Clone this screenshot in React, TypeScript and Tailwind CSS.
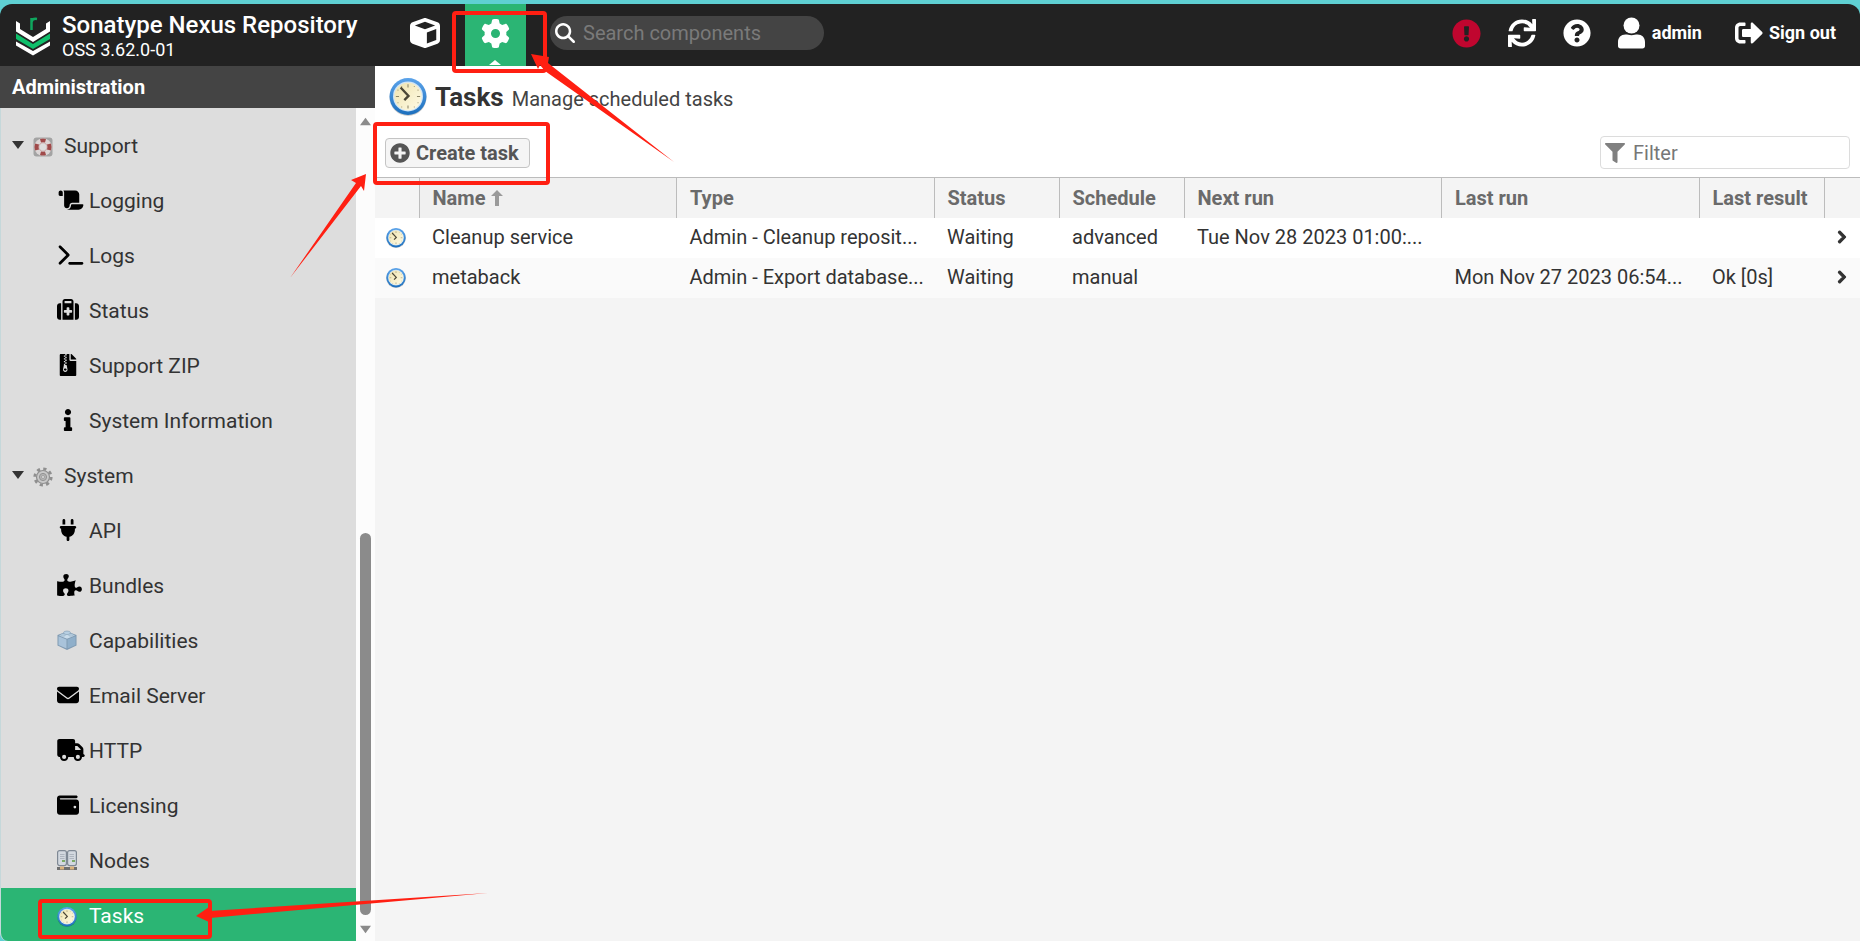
import { FunctionComponent, ReactNode } from "react";
import {
  FaChevronRight,
  FaExclamationCircle,
  FaFileArchive,
  FaFilter,
  FaInfo,
  FaPlusCircle,
  FaPuzzlePiece,
  FaQuestionCircle,
  FaSignOutAlt,
  FaSync,
} from "react-icons/fa";
import {
  FaCube,
  FaEnvelope,
  FaGear,
  FaMagnifyingGlass,
  FaPlug,
  FaScroll,
  FaSuitcaseMedical,
  FaTerminal,
  FaTruck,
  FaWallet,
} from "react-icons/fa6";

const ClockIcon: FunctionComponent<{ className: string }> = ({ className }) => (
  <svg className={className} viewBox="0 0 36 36" aria-hidden="true">
    <defs>
      <linearGradient id="clock-rim" x1="0" y1="0" x2="0" y2="1">
        <stop offset="0" stopColor="#5ba3ea" />
        <stop offset="1" stopColor="#1c6fbd" />
      </linearGradient>
      <linearGradient id="clock-face" x1="0" y1="0" x2="1" y2="1">
        <stop offset="0" stopColor="#efe3ae" />
        <stop offset="1" stopColor="#fffbe6" />
      </linearGradient>
    </defs>
    <circle cx="18" cy="18.5" r="17.500" fill="#00000033" />
    <circle cx="18" cy="17.5" r="17.500" fill="url(#clock-rim)" />
    <circle cx="18" cy="17.5" r="14.200" fill="#cfe4f7" />
    <circle cx="18" cy="17.5" r="13" fill="url(#clock-face)" />
    <path
      d="M18 6v3M18 26v3M6.500 17.500h3M26.500 17.500h3"
      stroke="#8c8668"
      strokeWidth="1"
    />
    <path
      d="M12 7.500v1M24 7.500v1M8 11.500h1M27 11.500h1M8 23.500h1M27 23.500h1M12 27v1M24 27v1"
      stroke="#a9a27f"
      strokeWidth="1"
    />
    <path d="M11 9l7.500 8-4 4" fill="none" stroke="#4b4636" strokeWidth="2.200" />
  </svg>
);

const LifebuoyIcon = () => (
  <svg className="size-5" viewBox="0 0 20 20" aria-hidden="true">
    <rect x="0.500" y="0.500" width="19" height="19" rx="3" fill="#a3a3a3" />
    <circle cx="10" cy="10" r="8.800" fill="#dcd6d6" />
    <path d="M7 2Q10 .8 13 2L12 5.500H8zM7 18q3 1.200 6 0l-1-3.500H8z" fill="#a04a4a" />
    <path d="M2 6.500Q.8 10 2 13.500L6 12.500V7.500zM18 6.500q1.200 3.500 0 7l-4-1v-5z" fill="#a04a4a" />
    <circle cx="10" cy="10" r="4.200" fill="#dedede" stroke="#c79b9b" strokeWidth="0.800" />
  </svg>
);

const SystemIcon = () => (
  <svg className="size-5" viewBox="0 0 20 20" aria-hidden="true">
    <circle
      cx="10"
      cy="10"
      r="8.200"
      fill="none"
      stroke="#8f8f8f"
      strokeWidth="2.800"
      strokeDasharray="3.200 3.240"
    />
    <circle cx="10" cy="10" r="6.500" fill="#c9c9c9" stroke="#8f8f8f" strokeWidth="1.200" />
    <circle cx="10" cy="10" r="3.600" fill="#b5b5b5" stroke="#929292" strokeWidth="1" />
    <circle cx="10" cy="10" r="1.500" fill="#dddddd" stroke="#8a8a8a" strokeWidth="0.600" />
  </svg>
);

const BrickIcon = () => (
  <svg className="size-5" viewBox="0 0 20 20" aria-hidden="true">
    <path d="M.5 5L10 1.500 19.500 5v10.500L10 20 .5 15.500z" fill="#7f9ab2" />
    <path d="M1.500 6.300l8 3.200v9L1.500 15z" fill="#a9c3da" />
    <path d="M18.500 6.300l-8 3.200v9l8-3.500z" fill="#8fafca" />
    <path d="M2 5.500L10 2.800l8 2.700-8 3.200z" fill="#c9dceb" />
    <ellipse cx="10" cy="2.800" rx="3.500" ry="1.800" fill="#b7cfe2" stroke="#7f9ab2" strokeWidth="0.600" />
    <ellipse cx="6" cy="5" rx="2.500" ry="1.200" fill="#b7cfe2" stroke="#8fa8bd" strokeWidth="0.500" />
    <ellipse cx="14" cy="5" rx="2.500" ry="1.200" fill="#b7cfe2" stroke="#8fa8bd" strokeWidth="0.500" />
  </svg>
);

const NodesIcon = () => (
  <svg className="size-5" viewBox="0 0 20 20" aria-hidden="true">
    <rect x="0.600" y="0.600" width="8.800" height="15" rx="2" fill="#d3d9e0" stroke="#7f8995" strokeWidth="1.200" />
    <rect x="10.600" y="0.600" width="8.800" height="15" rx="2" fill="#d3d9e0" stroke="#7f8995" strokeWidth="1.200" />
    <path
      d="M3 4.500h4.500M3 6.500h4.500M3 8.500h4.500M12.500 4.500H17M12.500 6.500H17M12.500 8.500H17"
      stroke="#a4acb6"
      strokeWidth="0.800"
    />
    <path d="M5 11h3M15 11h3" stroke="#5d9b3d" strokeWidth="1.500" />
    <path d="M0 18.500h20" stroke="#6f6f6f" strokeWidth="2.800" />
    <path d="M3 18h4M13 18h4" stroke="#d9b27c" strokeWidth="3" />
  </svg>
);

const Logo = () => (
  <svg className="h-[42px] w-[34px]" viewBox="0 0 34 42" aria-hidden="true">
    <path d="M0 7l4 2.500V15l13 8 13-8V9.500L34 7v10.500L17 28 0 17.500z" fill="#ffffff" />
    <path d="M0 19.500L17 30l17-10.500V25L17 35 0 25z" fill="#0fbf6b" />
    <path d="M0 27.500L17 37l17-9.500v4L17 41.500 0 31.500z" fill="#ffffff" />
    <path
      d="M15.500 16V4M15.500 8c.5-2.500 2.500-3.500 5.500-3"
      fill="none"
      stroke="#0fa65e"
      strokeWidth="2.500"
    />
  </svg>
);

const UserIcon = () => (
  <svg className="h-8 w-[27px]" viewBox="0 0 27 32" fill="currentColor" aria-hidden="true">
    <circle cx="13.500" cy="8.500" r="8" />
    <path d="M0 29v-4c0-4.500 3-7.500 7.500-7.500 2 0 3.500.7 6 .7s4-.7 6-.7c4.500 0 7.500 3 7.500 7.500v4c0 1.500-1 2.500-2.500 2.500h-22C1 31.500 0 30.500 0 29z" />
  </svg>
);

type TreeItem = { label: string; icon: ReactNode; active?: boolean };

const groups: { label: string; icon: ReactNode; items: TreeItem[] }[] = [
  {
    label: "Support",
    icon: <LifebuoyIcon />,
    items: [
      { label: "Logging", icon: <FaScroll className="h-[22px] w-7" /> },
      { label: "Logs", icon: <FaTerminal className="h-[22px] w-7" /> },
      { label: "Status", icon: <FaSuitcaseMedical className="size-[22px]" /> },
      { label: "Support ZIP", icon: <FaFileArchive className="size-[22px]" /> },
      { label: "System Information", icon: <FaInfo className="size-[22px]" /> },
    ],
  },
  {
    label: "System",
    icon: <SystemIcon />,
    items: [
      { label: "API", icon: <FaPlug className="size-[22px]" /> },
      { label: "Bundles", icon: <FaPuzzlePiece className="h-[22px] w-[25px]" /> },
      { label: "Capabilities", icon: <BrickIcon /> },
      { label: "Email Server", icon: <FaEnvelope className="size-[22px]" /> },
      { label: "HTTP", icon: <FaTruck className="h-[22px] w-7" /> },
      { label: "Licensing", icon: <FaWallet className="size-[22px]" /> },
      { label: "Nodes", icon: <NodesIcon /> },
      { label: "Tasks", icon: <ClockIcon className="size-5" />, active: true },
    ],
  },
];

const columns = [
  { label: "Type", width: "" },
  { label: "Status", width: "w-[125px]" },
  { label: "Schedule", width: "w-[125px]" },
  { label: "Next run", width: "" },
  { label: "Last run", width: "" },
  { label: "Last result", width: "w-[125px]" },
];

const tasks = [
  [
    "Cleanup service",
    "Admin - Cleanup reposit...",
    "Waiting",
    "advanced",
    "Tue Nov 28 2023 01:00:...",
    "",
    "",
  ],
  [
    "metaback",
    "Admin - Export database...",
    "Waiting",
    "manual",
    "",
    "Mon Nov 27 2023 06:54...",
    "Ok [0s]",
  ],
];

const TopBar = () => (
  <header className="flex h-[62px] shrink-0 items-stretch rounded-t-xl bg-[#222222] text-white">
    <div className="flex w-[394px] items-center gap-3 pl-4">
      <Logo />
      <div>
        <div className="text-[24px] leading-7 font-medium">Sonatype Nexus Repository</div>
        <div className="text-[18px] leading-[21px]">OSS 3.62.0-01</div>
      </div>
    </div>
    <button className="flex w-[61px] items-center justify-center pb-1" aria-label="Browse">
      <FaCube className="size-[30px]" />
    </button>
    <button
      className="relative ml-[10px] flex w-[61px] items-center justify-center bg-[#2bb574] pb-1"
      aria-label="Administration"
    >
      <FaGear className="size-[29px]" />
      <svg className="absolute bottom-px left-6 h-[5px] w-3" viewBox="0 0 12 5" aria-hidden="true">
        <path d="M6 0l6 5H0z" fill="#ffffff" />
      </svg>
    </button>
    <div className="ml-6 flex items-center pb-1">
      <label className="flex h-[34px] w-[274px] items-center gap-2 rounded-full bg-[#444444] pl-[5px]">
        <FaMagnifyingGlass className="size-5 shrink-0" />
        <input
          className="w-full min-w-0 bg-transparent text-[20px] outline-none placeholder:text-[#7a7a7a]"
          placeholder="Search components"
          aria-label="Search components"
        />
      </label>
    </div>
    <div className="ml-auto flex items-center gap-[27px] pr-6 pb-1 text-lg font-bold">
      <button aria-label="System status">
        <FaExclamationCircle className="size-[29px] text-[#c0062f]" />
      </button>
      <button aria-label="Refresh">
        <FaSync className="size-7" />
      </button>
      <button aria-label="Help">
        <FaQuestionCircle className="size-7" />
      </button>
      <button className="flex items-center gap-[7px]">
        <UserIcon />
        admin
      </button>
      <button className="ml-[6px] flex items-center gap-[6px]">
        <FaSignOutAlt className="size-7" />
        Sign out
      </button>
    </div>
  </header>
);

const Triangle: FunctionComponent<{ className: string }> = ({ className }) => (
  <svg className={className} viewBox="0 0 12 8" fill="currentColor" aria-hidden="true">
    <path d="M0 0h12L6 8z" />
  </svg>
);

const Sidebar = () => (
  <aside className="flex w-[375px] shrink-0 flex-col">
    <h2 className="flex h-[42px] shrink-0 items-center bg-[#444444] pl-3 text-[20px] font-bold text-white">
      Administration
    </h2>
    <div className="flex min-h-0 flex-1">
      <nav className="flex-1 overflow-hidden rounded-bl-lg border-l border-[#c5d8da] bg-[#dddddd] pt-[10px] text-[21px] text-[#333333]">
        {groups.map((group) => (
          <div key={group.label}>
            <button className="flex h-[55px] w-full items-center pt-0.5 pl-[11px]">
              <Triangle className="mb-1 h-2 w-3" />
              <span className="ml-[9px] flex w-[31px] items-center">{group.icon}</span>
              {group.label}
            </button>
            {group.items.map((item) => (
              <a
                key={item.label}
                href="#"
                className={
                  item.active
                    ? "flex h-[55px] items-center bg-[#2bb574] pt-0.5 pl-14 text-white"
                    : "flex h-[55px] items-center pt-0.5 pl-14"
                }
              >
                <span
                  className={
                    item.active
                      ? "flex w-8 shrink-0 items-center"
                      : "mb-1 flex w-8 shrink-0 items-center text-black"
                  }
                >
                  {item.icon}
                </span>
                {item.label}
              </a>
            ))}
          </div>
        ))}
      </nav>
      <div className="flex w-[19px] flex-col items-center bg-[#fcfcfc] pt-[9px] pb-[7px] text-[#8b8b8b]">
        <Triangle className="h-[9px] w-[11px] rotate-180" />
        <div className="mt-auto h-[382px] w-[11px] rounded-full bg-[#8b8b8b]" />
        <Triangle className="mt-[10px] h-[9px] w-[11px]" />
      </div>
    </div>
  </aside>
);

const TaskTable = () => (
  <table className="w-full table-fixed text-left text-[20px] text-[#333333]">
    <thead className="bg-[#f4f4f4] text-[#6a6a6a]">
      <tr className="h-10 border-t border-[#bcbcbc]">
        <th className="w-11 border-r border-[#bcbcbc]" aria-label="Icon"></th>
        <th className="border-r border-[#bcbcbc] bg-[#f0f0f0] pl-[13px] font-bold">
          <span className="flex items-center gap-[6px]">
            Name
            <svg className="h-4 w-3" viewBox="0 0 12 16" fill="#9a9a9a" aria-hidden="true">
              <path d="M6 0l6 6H8v10H4V6H0z" />
            </svg>
          </span>
        </th>
        {columns.map((column) => (
          <th
            key={column.label}
            className={`border-r border-[#bcbcbc] pl-[13px] font-bold whitespace-nowrap ${column.width}`}
          >
            {column.label}
          </th>
        ))}
        <th className="w-9" aria-label="Open"></th>
      </tr>
    </thead>
    <tbody>
      {tasks.map((task) => (
        <tr key={task[0]} className="h-10 bg-white even:bg-[#fafafa]">
          <td className="pl-[11px]">
            <ClockIcon className="size-5" />
          </td>
          {task.map((cell, i) => (
            <td key={i} className="pb-0.5 pl-[13px] whitespace-nowrap">
              {cell}
            </td>
          ))}
          <td className="pb-0.5 pl-3">
            <FaChevronRight
              className="h-[14px] w-3"
              stroke="currentColor"
              strokeWidth="40"
            />
          </td>
        </tr>
      ))}
    </tbody>
  </table>
);

const Annotations = () => (
  <div className="pointer-events-none absolute inset-0 overflow-hidden">
    <div className="absolute top-[11px] left-[452px] h-[62px] w-[95px] rounded-sm border-4 border-[#ff1f12]" />
    <div className="absolute top-[122px] left-[373px] h-[63px] w-[177px] rounded-sm border-4 border-[#ff1f12]" />
    <div className="absolute top-[899px] left-[38px] h-10 w-[174px] rounded-sm border-4 border-[#ff1f12]" />
    <svg
      className="absolute top-0 left-0 h-[941px] w-[700px]"
      viewBox="0 0 700 941"
      fill="#ff1f12"
      aria-hidden="true"
    >
      <path d="M531 54L549 57L548 63L674 162L545 71L540 65L538 69Z" />
      <path d="M366 174L364 191L361 186L290 278L356 183L351 180Z" />
      <path d="M196 916L209 907L209 911L488 893L210 918L209 922Z" />
    </svg>
  </div>
);

const App: FunctionComponent = () => (
  <div className="relative flex h-screen flex-col overflow-hidden bg-[#5fd0d3] pt-1 font-[Roboto,sans-serif]">
    <TopBar />
    <div className="flex min-h-0 flex-1">
      <Sidebar />
      <main className="min-w-0 flex-1 bg-[#f4f4f4]">
        <div className="bg-white">
          <div className="flex h-[62px] items-center gap-2 pl-[14px]">
            <ClockIcon className="size-[38px]" />
            <div className="flex items-baseline gap-2">
              <h1 className="text-[26px] font-bold text-[#333333]">Tasks</h1>
              <p className="text-[20px] text-[#444444]">Manage scheduled tasks</p>
            </div>
          </div>
          <div className="flex h-[49px] items-center justify-between pr-[10px] pl-[10px]">
            <button className="flex h-[30px] items-center gap-[6px] rounded-sm border border-[#c4c4c4] bg-[#f5f5f5] pr-[10px] pl-1 text-[20px] font-bold text-[#555555]">
              <FaPlusCircle className="size-5" />
              Create task
            </button>
            <label className="flex h-[33px] w-[250px] items-center gap-2 rounded-sm border border-[#dcdcdc] bg-white pl-1">
              <FaFilter className="size-5 shrink-0 text-[#808080]" />
              <input
                className="w-full min-w-0 bg-transparent text-[20px] outline-none placeholder:text-[#777777]"
                placeholder="Filter"
                aria-label="Filter"
              />
            </label>
          </div>
        </div>
        <TaskTable />
      </main>
    </div>
    <Annotations />
  </div>
);

export default App;
